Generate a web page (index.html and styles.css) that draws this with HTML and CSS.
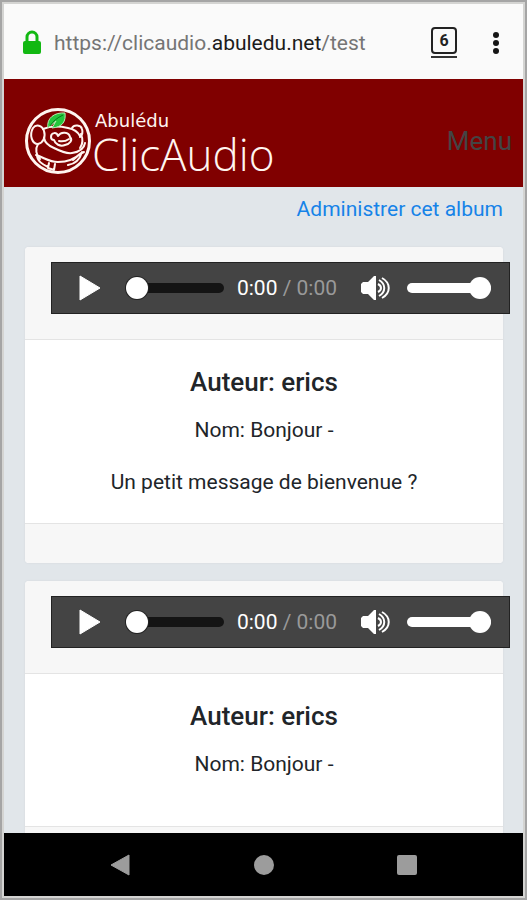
FILE: index.html
```html
<!DOCTYPE html>
<html lang="fr">
<head>
<meta charset="utf-8">
<meta name="viewport" content="width=device-width, initial-scale=1">
<title>AbulÉdu ClicAudio</title>
<link rel="stylesheet" href="styles.css">
</head>
<body>
<div class="browser-bar">
  <svg class="lock" viewBox="0 0 20 25" aria-hidden="true"><path d="M5 12V7a5 5 0 0 1 10 0v5" fill="none" stroke="#12b812" stroke-width="3"/><rect x="1" y="11" width="18" height="13" rx="2" fill="#12b812"/></svg>
  <div class="url">https://clicaudio.<span class="domain">abuledu.net</span>/test</div>
  <button class="tabs"><span class="tab-count">6</span></button>
  <button class="more" aria-label="Plus"><svg viewBox="0 0 6 22"><g fill="#151515"><circle cx="3" cy="3" r="3"/><circle cx="3" cy="11" r="3"/><circle cx="3" cy="19" r="3"/></g></svg></button>
</div>
<header class="site-header">
  <a class="brand" href="#">
    <svg class="logo" viewBox="0 0 68 68" aria-hidden="true">
      <g fill="none" stroke="#fff5f0" stroke-width="2" stroke-linecap="round" stroke-linejoin="round">
        <circle cx="34" cy="34" r="31.500" stroke-width="3"/>
        <path d="M9 21C12 17 18 18 20 24c2 6-1 12-6 13C8 37 5 28 9 21z"/>
        <path d="M19 22c7-3 16-3 25-1 5 1 10 4 12 8"/>
        <path d="M48 21c2-4 9-3 10 1 1 3 0 6-2 8"/>
        <path d="M14 37c-3 5-2 11 2 15M20 31c1 5 5 8 10 10 6 3 12 6 18 5 7-1 12-4 13-10"/>
        <path d="M57 27c2 5 2 10-1 14M27 30c0-5 6-5 7-1 3-5 11-4 12 1 3 3 0 7-5 8-5 2-10-1-11-5-2 0-3-1-3-3z"/>
        <path d="M35 34c4 1 7 0 10-2"/>
        <path d="M12 48c9 3 13 7 22 7s17-3 23-9M13 48c0 6 5 9 11 12M25 56l-1 5 6 2 1-6M49 53l7-6 4-2M44 58c7-1 12-6 14-13"/>
      </g>
      <path d="M24 21C22 11 31 5 41 6c1 8-2 14-13 15l4-7z" fill="#24c63c" stroke="#b7efb4"/>
      <path d="M26 19c3-5 7-8 13-11" fill="none" stroke="#08751b"/>
    </svg>
    <span class="brand-text"><span class="brand-small">Abulédu</span><span class="brand-name">ClicAudio</span></span>
  </a>
  <button class="menu">Menu</button>
</header>
<main>
  <a class="admin" href="#">Administrer cet album</a>
  <article class="card">
    <div class="card-head">
      <div class="player">
        <button class="play" aria-label="Lecture"><svg viewBox="0 0 22 26"><path d="M1 1v24L21 13z" fill="#fff" stroke="#fff" stroke-linejoin="round"/></svg></button>
        <input class="seek" type="range" min="0" max="100" value="0" aria-label="Position">
        <span class="time">0:00 <span class="total">/ 0:00</span></span>
        <button class="mute" aria-label="Muet"><svg viewBox="0 0 30 26"><path d="M2 7h5l6-6h2v24h-2l-6-6H2L0 17V9z" fill="#fff"/><g fill="none" stroke="#fff" stroke-width="2"><path d="M17 9c4 2 4 6 0 8M18 5c7 4 7 12 0 16M21 3c9 5 9 15 0 20"/></g></svg></button>
        <input class="volume" type="range" min="0" max="100" value="100" aria-label="Volume">
      </div>
    </div>
    <div class="card-body"><h2>Auteur: erics</h2><p>Nom: Bonjour -</p><p>Un petit message de bienvenue ?</p></div>
    <div class="card-foot"></div>
  </article>
  <article class="card">
    <div class="card-head">
      <div class="player">
        <button class="play" aria-label="Lecture"><svg viewBox="0 0 22 26"><path d="M1 1v24L21 13z" fill="#fff" stroke="#fff" stroke-linejoin="round"/></svg></button>
        <input class="seek" type="range" min="0" max="100" value="0" aria-label="Position">
        <span class="time">0:00 <span class="total">/ 0:00</span></span>
        <button class="mute" aria-label="Muet"><svg viewBox="0 0 30 26"><path d="M2 7h5l6-6h2v24h-2l-6-6H2L0 17V9z" fill="#fff"/><g fill="none" stroke="#fff" stroke-width="2"><path d="M17 9c4 2 4 6 0 8M18 5c7 4 7 12 0 16M21 3c9 5 9 15 0 20"/></g></svg></button>
        <input class="volume" type="range" min="0" max="100" value="100" aria-label="Volume">
      </div>
    </div>
    <div class="card-body short"><h2>Auteur: erics</h2><p>Nom: Bonjour -</p></div>
    <div class="card-foot"></div>
  </article>
</main>
<nav class="system-nav">
  <button aria-label="Retour"><svg viewBox="0 0 22 22"><path d="M20 1v20L2 11z" fill="#9c9c9c" stroke="#9c9c9c" stroke-linejoin="round"/></svg></button>
  <button aria-label="Accueil"><svg viewBox="0 0 22 22"><circle cx="11" cy="11" r="10" fill="#9c9c9c"/></svg></button>
  <button aria-label="Applications"><svg viewBox="0 0 22 22"><rect x="1" y="1" width="20" height="20" rx="2" fill="#9c9c9c"/></svg></button>
</nav>
</body>
</html>
```
FILE: styles.css
```css
* { box-sizing: border-box; }
body {
  margin: 0;
  height: 100vh;
  display: flex;
  flex-direction: column;
  overflow: hidden;
  font-family: Roboto, sans-serif;
  font-size: 21px;
  line-height: 32px;
  color: #212529;
  background: #e1e6ea;
  border: 2px solid #a5a5a5;
  box-shadow: inset 0 0 0 2px #d4d4d2;
  padding: 2px;
}
button { border: 0; padding: 0; background: none; font: inherit; color: inherit; }
svg { display: block; }
a { text-decoration: none; }

.browser-bar {
  flex: none;
  height: 75px;
  display: flex;
  align-items: center;
  padding: 2px 24px 0 18px;
  background: #fafafa;
}
.lock { width: 20px; height: 25px; margin-right: 12px; }
.url { flex: 1; color: #757575; }
.domain { color: #1c1c1c; }
.tabs {
  width: 26px;
  height: 31px;
  margin-right: 36px;
  border-bottom: 2px solid #333;
}
.tab-count {
  display: block;
  height: 27px;
  margin-bottom: 2px;
  border: 2px solid #222;
  border-radius: 4px;
  font-size: 16px;
  font-weight: 700;
  line-height: 23px;
  color: #222;
}
.more svg { width: 6px; height: 22px; }

.site-header {
  flex: none;
  height: 108px;
  display: flex;
  align-items: center;
  justify-content: space-between;
  padding: 16px 11px 0 20px;
  background: #800000;
}
.brand { display: flex; align-items: center; color: #fff5f0; }
.logo { width: 68px; height: 68px; }
.brand-text { display: flex; flex-direction: column; padding-top: 8px; }
.brand-small { padding-left: 3px; font: 18px/18px "DejaVu Sans", sans-serif; }
.brand-name { font: 300 44px/48px "Open Sans", sans-serif; }
.menu { font-size: 26px; color: #444; }

main {
  flex: 1;
  min-height: 0;
  overflow: hidden;
  display: flex;
  flex-direction: column;
  gap: 18px;
  padding: 6px 20px 0 21px;
}
.admin { align-self: flex-end; margin-bottom: 4px; color: #1683e8; }
.card {
  flex: none;
  background: #fff;
  border-radius: 4px;
  box-shadow: 0 0 2px #d0d5d8;
}
.card-head {
  height: 93px;
  padding: 15px 0 0 26px;
  background: #f7f7f7;
  border-bottom: 1px solid #e4e4e4;
  border-radius: 4px 4px 0 0;
}
.player {
  height: 52px;
  margin-right: -7px;
  display: flex;
  align-items: center;
  padding: 0 18px 0 27px;
  background: #444;
  border: 1px solid #222;
}
.play svg { width: 22px; height: 26px; }
.mute svg { width: 30px; height: 26px; }
.time { white-space: nowrap; color: #fff; margin: 0 24px 0 13px; }
.total { color: #999; }
.player input {
  appearance: none;
  height: 24px;
  margin: 0;
  background: none;
}
.seek { flex: 98; min-width: 0; }
.volume { flex: 84; min-width: 0; }
.player .seek { margin-left: 25px; }
.player .volume { margin-left: 16px; }
.player input::-webkit-slider-runnable-track { height: 10px; border-radius: 5px; background: #141414; }
.player .volume::-webkit-slider-runnable-track { background: #fff; }
.player input::-webkit-slider-thumb {
  appearance: none;
  width: 22px;
  height: 22px;
  margin-top: -6px;
  border-radius: 50%;
  background: #fff;
  box-shadow: 0 0 0 1px #222;
}
.player .volume::-webkit-slider-thumb { box-shadow: none; }

.card-body { min-height: 183px; padding: 26px 24px 25px; text-align: center; }
.card-body.short { min-height: 152px; }
h2 { margin: 0 0 16px; font-size: 26px; font-weight: 500; line-height: 32px; }
p { margin: 0 0 20px; }
.card-body p:last-child { margin-bottom: 0; }
.card-foot {
  height: 40px;
  background: #f7f7f7;
  border-top: 1px solid #e4e4e4;
  border-radius: 0 0 4px 4px;
}

.system-nav {
  flex: none;
  height: 63px;
  display: flex;
  align-items: center;
  justify-content: space-between;
  padding: 0 105px;
  background: #000;
}
.system-nav svg { width: 22px; height: 22px; }
```
